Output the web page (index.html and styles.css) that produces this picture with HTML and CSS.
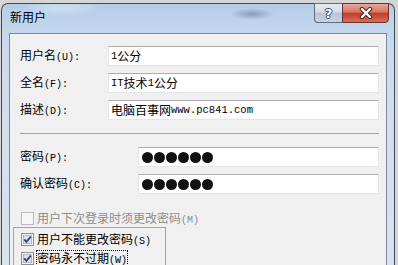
FILE: index.html
```html
<!DOCTYPE html>
<html lang="zh-CN">
<head>
<meta charset="utf-8">
<title>新用户</title>
<link rel="stylesheet" href="styles.css">
</head>
<body>
<div class="window">
  <div class="titlebar">
    <span class="title">新用户</span>
    <div class="caption-buttons">
      <div class="btn-help">?</div>
      <div class="btn-close">
        <svg width="14" height="12" viewBox="0 0 14 12">
          <path d="M3 2 L11 10 M11 2 L3 10" stroke="#4a2a26" stroke-width="4.4" stroke-linecap="round" fill="none"/>
          <path d="M3 2 L11 10 M11 2 L3 10" stroke="#ffffff" stroke-width="2.4" stroke-linecap="round" fill="none"/>
        </svg>
      </div>
    </div>
  </div>
  <div class="client">
    <div class="form-grid">
      <div class="label">用户名<span class="en">(U):</span></div>
      <div class="textbox"><span class="en-input">1</span>公分</div>
      <div class="label">全名<span class="en">(F):</span></div>
      <div class="textbox"><span class="en-input">IT</span>技术<span class="en-input">1</span>公分</div>
      <div class="label">描述<span class="en">(D):</span></div>
      <div class="textbox">电脑百事网<span class="en-input">www.pc841.com</span></div>
    </div>
    <div class="separator"></div>
    <div class="form-grid pw-grid">
      <div class="label">密码<span class="en">(P):</span></div>
      <div class="textbox pw">
        <span class="dot"></span><span class="dot"></span><span class="dot"></span><span class="dot"></span><span class="dot"></span><span class="dot"></span>
      </div>
      <div class="label">确认密码<span class="en">(C):</span></div>
      <div class="textbox pw">
        <span class="dot"></span><span class="dot"></span><span class="dot"></span><span class="dot"></span><span class="dot"></span><span class="dot"></span>
      </div>
    </div>
    <div class="check-row disabled">
      <svg class="cb" width="13" height="13" viewBox="0 0 13 13">
        <rect x="0.5" y="0.5" width="12" height="12" fill="#f6f6f6" stroke="#bcbcbc"/>
      </svg>
      <span class="check-text">用户下次登录时须更改密码<span class="en">(M)</span></span>
    </div>
    <div class="highlight-box">
      <div class="check-row">
        <svg class="cb" width="13" height="13" viewBox="0 0 13 13">
          <rect x="0.5" y="0.5" width="12" height="12" fill="#f4f4f4" stroke="#8e8f8f"/>
          <rect x="2.5" y="2.5" width="8" height="8" fill="#dfe2e7" stroke="#b4b8be"/>
          <path d="M3.2 6.4 L5.4 8.8 L9.8 3.6" stroke="#3a4a78" stroke-width="1.9" fill="none"/>
        </svg>
        <span class="check-text">用户不能更改密码<span class="en">(S)</span></span>
      </div>
      <div class="check-row">
        <svg class="cb" width="13" height="13" viewBox="0 0 13 13">
          <rect x="0.5" y="0.5" width="12" height="12" fill="#f4f4f4" stroke="#8e8f8f"/>
          <rect x="2.5" y="2.5" width="8" height="8" fill="#dfe2e7" stroke="#b4b8be"/>
          <path d="M3.2 6.4 L5.4 8.8 L9.8 3.6" stroke="#3a4a78" stroke-width="1.9" fill="none"/>
        </svg>
        <span class="check-text focused">密码永不过期<span class="en">(W)</span></span>
      </div>
    </div>
  </div>
</div>
</body>
</html>
```
FILE: styles.css
```css
* {
  box-sizing: border-box;
}

html,
body {
  margin: 0;
  padding: 0;
}

body {
  width: 398px;
  height: 265px;
  overflow: hidden;
  background: #d6d6d6;
  font-family: "Noto Sans CJK SC", "Noto Sans", sans-serif;
  font-size: 12px;
  color: #000;
}

.window {
  margin: 3px 0 0 1px;
  width: 394px;
  height: 262px;
  border: 1px solid #3e4959;
  border-bottom: none;
  border-radius: 7px 7px 0 0;
  padding: 0 7px;
  display: flex;
  flex-direction: column;
  background:
    radial-gradient(ellipse 22px 6px at 250px 10px, rgba(95, 115, 145, 0.55), rgba(95, 115, 145, 0)),
    radial-gradient(ellipse 40px 8px at 60px 4px, rgba(255, 255, 255, 0.35), rgba(255, 255, 255, 0)),
    linear-gradient(to bottom, #b5cde7 0, #c3d8ee 28px, #cddcec 60px, #d8e3ef 100%);
}

.titlebar {
  height: 29px;
  flex: none;
  display: flex;
  justify-content: space-between;
  align-items: flex-start;
}

.title {
  padding: 4px 0 0 1px;
  line-height: 17px;
  font-size: 12px;
  color: #000;
}

.caption-buttons {
  display: flex;
  margin-top: -1px;
  margin-right: -2px;
}

.btn-help {
  width: 28px;
  height: 20px;
  border: 1px solid #5d6c80;
  border-right: none;
  border-radius: 0 0 0 4px;
  background: linear-gradient(to bottom, #e6ebf1 0, #d3dbe5 45%, #b8c4d2 50%, #c9d3df 100%);
  display: flex;
  align-items: center;
  justify-content: center;
  font-family: "DejaVu Sans", sans-serif;
  font-weight: bold;
  font-size: 13px;
  line-height: 13px;
  color: #fff;
  text-shadow: 1px 0 0 #3d4b5e, -1px 0 0 #3d4b5e, 0 1px 0 #3d4b5e, 0 -1px 0 #3d4b5e;
}

.btn-close {
  width: 47px;
  height: 20px;
  border: 1px solid #6e2f28;
  border-radius: 0 0 4px 0;
  background: linear-gradient(to bottom, #e9a99c 0, #d8745f 45%, #c13d28 52%, #d2705c 100%);
  display: flex;
  align-items: center;
  justify-content: center;
}

.client {
  flex: 1;
  min-height: 0;
  overflow: hidden;
  border: 1px solid #7a8a9e;
  border-bottom: none;
  background: #f0f0f0;
  padding: 12px 7px 0 10px;
}

.form-grid {
  display: grid;
  grid-template-columns: 88px 1fr;
  row-gap: 7px;
  align-items: center;
}

.pw-grid {
  grid-template-columns: 118px 1fr;
  margin-top: 13px;
}

.label {
  white-space: nowrap;
  line-height: 14px;
}

.en {
  font-family: "Liberation Mono", monospace;
  font-size: 10px;
}

.en-input {
  font-family: "Liberation Mono", monospace;
  font-size: 10.5px;
}

.textbox {
  height: 20px;
  border: 1px solid #e2e6ec;
  border-top-color: #abadb3;
  background: #fff;
  padding-left: 2px;
  display: flex;
  align-items: center;
  white-space: nowrap;
  line-height: 14px;
}

.pw {
  padding-left: 3px;
  gap: 1px;
}

.dot {
  width: 11px;
  height: 11px;
  border-radius: 50%;
  background: #111;
}

.separator {
  margin-top: 13px;
  height: 1px;
  background: #a0a0a0;
}

.check-row {
  display: flex;
  align-items: center;
  gap: 3px;
  height: 13px;
}

.disabled {
  margin-top: 18px;
  margin-left: 1px;
  color: #8d8d8d;
}

.cb {
  flex: none;
  display: block;
}

.check-text {
  line-height: 13px;
  white-space: nowrap;
}

.focused {
  outline: 1px dotted #000;
}

.highlight-box {
  margin-top: 2px;
  margin-left: -7px;
  width: 153px;
  border: 1px solid #d77fe0;
  padding: 5px 0 12px 7px;
  display: flex;
  flex-direction: column;
  gap: 6px;
}
```
